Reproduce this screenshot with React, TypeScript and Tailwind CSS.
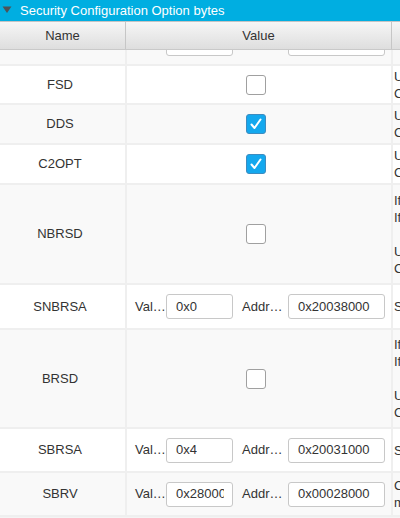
import React from 'react';

type Row =
  | { name: string; kind: 'check'; checked: boolean; h: string; desc: string[] }
  | { name: string; kind: 'pair'; value: string; addr: string; h: string; desc: string[] };

const rows: Row[] = [
  { name: 'FSD', kind: 'check', checked: false, h: 'h-[39px]', desc: ['Unchecked : System and Flash secure', 'Checked : System and Flash non-secure'] },
  { name: 'DDS', kind: 'check', checked: true, h: 'h-[40px]', desc: ['Unchecked : CPU2 debug access enabled', 'Checked : CPU2 debug access disabled'] },
  { name: 'C2OPT', kind: 'check', checked: true, h: 'h-[40px]', desc: ['Unchecked : SBRV will address SRAM2', 'Checked : SBRV will address Flash'] },
  {
    name: 'NBRSD',
    kind: 'check',
    checked: false,
    h: 'h-[100px]',
    desc: ['If SNBRSA is 0x0, no secure area', 'If SNBRSA is not 0x0, secure area', '', 'Unchecked : SRAM2b is secure', 'Checked : SRAM2b is non-secure'],
  },
  { name: 'SNBRSA', kind: 'pair', value: '0x0', addr: '0x20038000', h: 'h-[45px]', desc: ['Secure non-backup SRAM2b start address'] },
  {
    name: 'BRSD',
    kind: 'check',
    checked: false,
    h: 'h-[99px]',
    desc: ['If SBRSA is 0x0, no secure area', 'If SBRSA is not 0x0, secure area', '', 'Unchecked : SRAM2a is secure', 'Checked : SRAM2a is non-secure'],
  },
  { name: 'SBRSA', kind: 'pair', value: '0x4', addr: '0x20031000', h: 'h-[44px]', desc: ['Secure backup SRAM2a start address'] },
  { name: 'SBRV', kind: 'pair', value: '0x28000', addr: '0x00028000', h: 'h-[44px]', desc: ['CPU2 boot reset vector', 'memory offset'] },
];

function CheckBox({ checked }: { checked: boolean }) {
  if (checked) {
    return (
      <div className="w-[20px] h-[20px] rounded-[3px] bg-[#14a8ee] border border-[#3d8cc0] flex items-center justify-center">
        <svg width="14" height="14" viewBox="0 0 14 14">
          <polyline points="2.5,7.5 5.5,11 11.5,2.5" fill="none" stroke="#ffffff" strokeWidth="2" strokeLinecap="round" strokeLinejoin="round" />
        </svg>
      </div>
    );
  }
  return <div className="w-[20px] h-[20px] rounded-[3px] bg-white border border-[#a0a0a0]" />;
}

function Field({ value, w }: { value: string; w: string }) {
  return (
    <div className={`${w} h-[25px] bg-white border border-[#c8c8c8] rounded-[3px] pl-[9px] pr-[8px] flex items-center`}>
      <div className="overflow-hidden whitespace-nowrap text-[#333]">{value}</div>
    </div>
  );
}

function PairCell({ value, addr }: { value: string; addr: string }) {
  return (
    <div className="flex items-center pl-[8px]">
      <span className="w-[31px] whitespace-nowrap text-[#333]">Val…</span>
      <Field value={value} w="w-[67px]" />
      <span className="w-[55px] pl-[9px] whitespace-nowrap text-[#333]">Addr…</span>
      <Field value={addr} w="w-[97px]" />
    </div>
  );
}

export default function App() {
  return (
    <div className="w-[400px] h-[518px] overflow-hidden bg-[#f4f4f4] text-[13px] text-[#333]" style={{ fontFamily: '"Liberation Sans", Arial, sans-serif' }}>
      {/* title bar */}
      <div className="h-[21px] bg-[#00aee1] flex items-center text-white text-[13px]">
        <svg width="20" height="21" viewBox="0 0 20 21" className="shrink-0">
          <polygon points="2.5,6.5 11.5,6.5 7,13" fill="#4d5358" />
        </svg>
        <span className="whitespace-nowrap">Security Configuration Option bytes</span>
      </div>

      {/* column header */}
      <div className="relative z-10 h-[29px] flex bg-gradient-to-b from-[#f6f6f6] to-[#dedede] border-t border-[#c4c4c4] border-b border-b-[#c9c9c9]">
        <div className="w-[126px] shrink-0 flex items-center justify-center border-r border-[#c6c6c6]">Name</div>
        <div className="w-[266px] shrink-0 flex items-center justify-center border-r border-[#c6c6c6]">Value</div>
        <div className="flex-1" />
      </div>

      {/* rows, scrolled so the first one sits under the header */}
      <div className="overflow-hidden h-[468px]">
        <div className="-mt-[28px] h-[44px] flex bg-[#f9f9f9] border-b-2 border-[#efefef]">
          <div className="w-[127px] shrink-0 border-r-2 border-[#efefef]" />
          <div className="w-[266px] shrink-0 border-r-2 border-[#efefef] flex items-center pl-[39px]">
            <Field value="" w="w-[67px]" />
            <div className="w-[55px]" />
            <Field value="" w="w-[97px]" />
          </div>
          <div className="flex-1" />
        </div>
        {rows.map((r, i) => (
          <div key={r.name} className={`${r.h} flex border-b-2 border-[#efefef] ${i % 2 === 0 ? 'bg-white' : 'bg-[#f9f9f9]'}`}>
            <div className="w-[127px] shrink-0 border-r-2 border-[#efefef] flex items-center justify-center pr-[5px]">{r.name}</div>
            <div className="w-[266px] shrink-0 border-r-2 border-[#efefef] flex items-center">
              {r.kind === 'check' ? (
                <div className="w-full flex justify-center pr-[6px]">
                  <CheckBox checked={r.checked} />
                </div>
              ) : (
                <PairCell value={r.value} addr={r.addr} />
              )}
            </div>
            <div className="flex-1 flex flex-col justify-center pl-[1px] leading-[17px] whitespace-nowrap overflow-hidden">
              {r.desc.map((d, j) => (
                <div key={j} className="h-[17px]">{d}</div>
              ))}
            </div>
          </div>
        ))}
      </div>
    </div>
  );
}
